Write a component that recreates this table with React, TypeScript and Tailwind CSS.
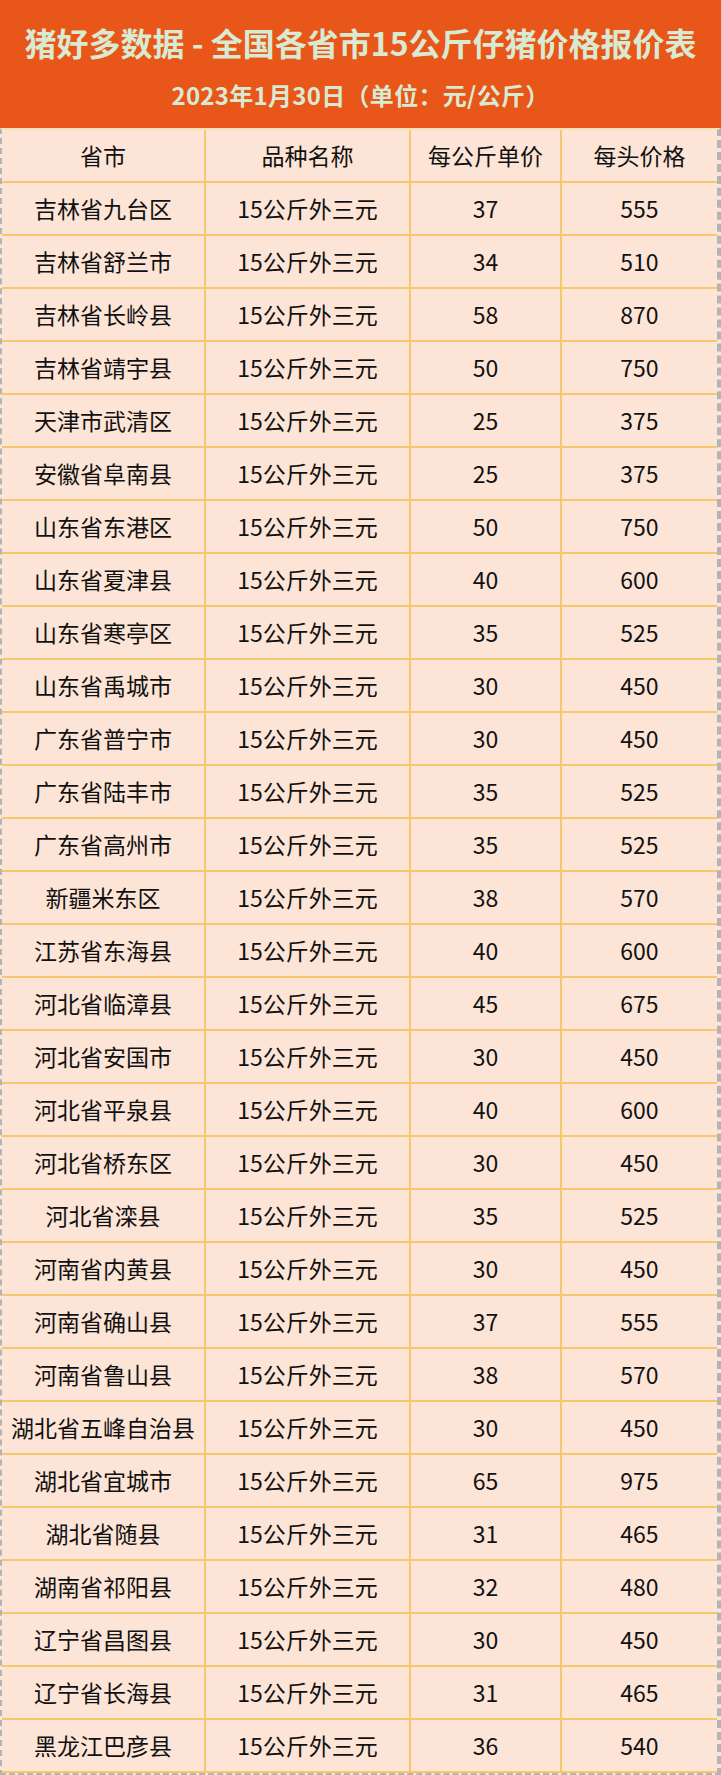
const rows: [string, string, string][] = [
  ["吉林省九台区", "37", "555"],
  ["吉林省舒兰市", "34", "510"],
  ["吉林省长岭县", "58", "870"],
  ["吉林省靖宇县", "50", "750"],
  ["天津市武清区", "25", "375"],
  ["安徽省阜南县", "25", "375"],
  ["山东省东港区", "50", "750"],
  ["山东省夏津县", "40", "600"],
  ["山东省寒亭区", "35", "525"],
  ["山东省禹城市", "30", "450"],
  ["广东省普宁市", "30", "450"],
  ["广东省陆丰市", "35", "525"],
  ["广东省高州市", "35", "525"],
  ["新疆米东区", "38", "570"],
  ["江苏省东海县", "40", "600"],
  ["河北省临漳县", "45", "675"],
  ["河北省安国市", "30", "450"],
  ["河北省平泉县", "40", "600"],
  ["河北省桥东区", "30", "450"],
  ["河北省滦县", "35", "525"],
  ["河南省内黄县", "30", "450"],
  ["河南省确山县", "37", "555"],
  ["河南省鲁山县", "38", "570"],
  ["湖北省五峰自治县", "30", "450"],
  ["湖北省宜城市", "65", "975"],
  ["湖北省随县", "31", "465"],
  ["湖南省祁阳县", "32", "480"],
  ["辽宁省昌图县", "30", "450"],
  ["辽宁省长海县", "31", "465"],
  ["黑龙江巴彦县", "36", "540"],
];

const font = { fontFamily: '"Noto Sans CJK SC", "Noto Sans", sans-serif' };

function Row({ cells }: { cells: string[] }) {
  return (
    <div className="grid h-[53px] grid-cols-[204px_205px_151px_1fr] border-b-2 border-[#f6c86e]">
      {cells.map((c, i) => (
        <div
          key={i}
          className={
            "flex items-center justify-center whitespace-nowrap text-[23px] text-[#111]" +
            (i < 3 ? " border-r-2 border-[#f6c86e]" : "")
          }
        >
          {c}
        </div>
      ))}
    </div>
  );
}

export default function App() {
  return (
    <div className="w-[721px] bg-white" style={font}>
      <div className="flex h-[128px] flex-col items-center bg-[#e8561a] pt-[18px] font-bold text-[#d8ead2]">
        <h1 className="whitespace-nowrap text-[32px] leading-[48px]">
          猪好多数据 - 全国各省市15公斤仔猪价格报价表
        </h1>
        <p className="mt-[12px] whitespace-nowrap text-[24px] leading-[34px] tracking-[0.3px]">
          2023年1月30日（单位：元/公斤）
        </p>
      </div>
      <div className="border-b-[3px] border-l-2 border-r-[4px] border-t-2 border-dashed border-[#b4b4b4] border-t-[#fbe2b4] bg-[#fce4d6] [border-top-style:solid]">
        <Row cells={["省市", "品种名称", "每公斤单价", "每头价格"]} />
        {rows.map((r) => (
          <Row key={r[0]} cells={[r[0], "15公斤外三元", r[1], r[2]]} />
        ))}
      </div>
    </div>
  );
}
